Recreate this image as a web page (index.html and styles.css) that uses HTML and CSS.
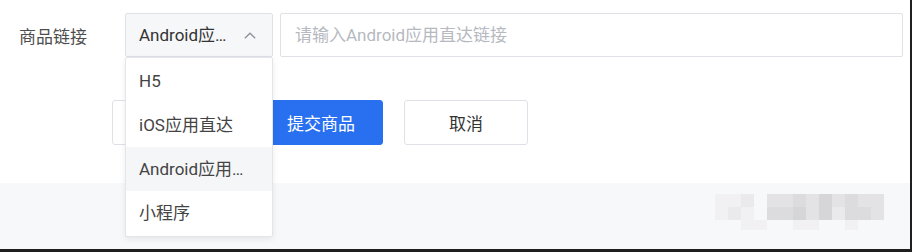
FILE: index.html
```html
<!DOCTYPE html>
<html lang="zh-CN">
<head>
    <meta charset="UTF-8">
    <meta name="viewport" content="width=device-width, initial-scale=1.0">
    <title>商品链接</title>
    <link rel="stylesheet" href="styles.css">
</head>
<body>

    <div class="page">
        <div class="form">
            <div class="form-row">
                <label class="form-label">商品链接</label>
                <div class="select">
                    <span class="select-value">Android应用直达</span>
                    <svg class="select-arrow" width="12" height="7" viewBox="0 0 12 7">
                        <path d="M0.8 6.3 L6 1.2 L11.2 6.3" fill="none" stroke="#8d919a" stroke-width="1.3"/>
                    </svg>
                    <ul class="select-options">
                        <li>H5</li>
                        <li>iOS应用直达</li>
                        <li class="active">Android应用直达</li>
                        <li>小程序</li>
                    </ul>
                </div>
                <input type="text" class="link-input" placeholder="请输入Android应用直达链接">
            </div>
            <div class="form-actions">
                <button class="btn btn-wide">预览</button>
                <button class="btn btn-primary">提交商品</button>
                <button class="btn">取消</button>
            </div>
        </div>

        <div class="footer">
            <div class="watermark">
                <i class="s1"></i><i class="s1"></i><i class="s2"></i><i></i><i class="s3"></i><i class="s3"></i><i class="s4"></i><i class="s3"></i><i class="s5"></i><i class="s3"></i><i class="s4"></i><i class="s3"></i><i class="s3"></i>
                <i class="s1"></i><i class="s2"></i><i class="s1"></i><i></i><i class="s4"></i><i class="s4"></i><i class="s5"></i><i class="s3"></i><i class="s5"></i><i class="s2"></i><i class="s4"></i><i class="s4"></i><i class="s3"></i>
                <i></i><i></i><i class="s1"></i><i class="s1"></i><i></i><i></i><i class="s1"></i><i class="s1"></i><i></i><i></i><i class="s1"></i><i></i><i></i>
            </div>
        </div>
    </div>

</body>
</html>
```

FILE: styles.css
```css
body {
    margin: 0;
    background-color: #1f1f1f;
    font-family: Roboto, "Noto Sans CJK SC", sans-serif;
    overflow: hidden;
}
.page {
    width: 910px;
    height: 249px;
    background-color: #fff;
    display: flex;
    flex-direction: column;
}
.form {
    height: 183px;
    padding-top: 13px;
    box-sizing: border-box;
}
.form-row {
    display: flex;
    align-items: center;
    padding-right: 7px;
}
.form-label {
    width: 125px;
    flex-shrink: 0;
    padding-left: 19px;
    box-sizing: border-box;
    font-size: 17px;
    line-height: 24px;
    color: #4d4d4d;
    margin-top: 3px;
}
.select {
    position: relative;
    width: 148px;
    height: 44px;
    flex-shrink: 0;
    box-sizing: border-box;
    border: 1px solid #dfe1e6;
    border-radius: 2px;
    background-color: #f6f7f9;
    display: flex;
    align-items: center;
    padding-left: 13px;
}
.select-value {
    width: 92px;
    font-size: 17px;
    line-height: 24px;
    color: #333;
    white-space: nowrap;
    overflow: hidden;
    text-overflow: ellipsis;
}
.select-arrow {
    margin-left: auto;
    margin-right: 16px;
}
.select-options {
    position: absolute;
    top: 43px;
    left: -1px;
    width: 148px;
    box-sizing: border-box;
    margin: 0;
    padding: 1px 0;
    list-style: none;
    background-color: #fff;
    border: 1px solid #e3e5ea;
    border-radius: 2px;
    box-shadow: 0 2px 6px rgba(0, 0, 0, 0.08);
    z-index: 10;
}
.select-options li {
    height: 44px;
    line-height: 44px;
    padding: 0 21px 0 13px;
    font-size: 17px;
    color: #444;
    white-space: nowrap;
    overflow: hidden;
    text-overflow: ellipsis;
}
.select-options li.active {
    background-color: #f5f6f8;
}
.link-input {
    flex: 1;
    min-width: 0;
    height: 44px;
    box-sizing: border-box;
    margin-left: 7px;
    padding: 0 14px;
    border: 1px solid #dfe1e6;
    border-radius: 2px;
    font-family: inherit;
    font-size: 17px;
    color: #333;
    outline: none;
}
.link-input::placeholder {
    color: #b6b9bf;
}
.form-actions {
    display: flex;
    gap: 21px;
    margin-top: 43px;
    padding-left: 112px;
}
.btn {
    width: 124px;
    height: 45px;
    box-sizing: border-box;
    border: 1px solid #dfe1e6;
    border-radius: 3px;
    background-color: #fff;
    font-family: inherit;
    font-size: 17px;
    color: #333;
    cursor: pointer;
}
.btn-wide {
    width: 126px;
}
.btn-primary {
    background-color: #2970f0;
    border-color: #2970f0;
    color: #fff;
}
.footer {
    flex: 1;
    background-color: #f7f8fa;
    display: flex;
    justify-content: flex-end;
    padding: 11px 26px 0 0;
}
.watermark {
    display: grid;
    grid-template-columns: repeat(13, 13px);
    grid-template-rows: 13px 13px 10px;
    align-self: flex-start;
}
.watermark .s1 { background-color: #f1f1f3; }
.watermark .s2 { background-color: #eaeaec; }
.watermark .s3 { background-color: #e3e3e5; }
.watermark .s4 { background-color: #dcdcde; }
.watermark .s5 { background-color: #d6d6d8; }
```
